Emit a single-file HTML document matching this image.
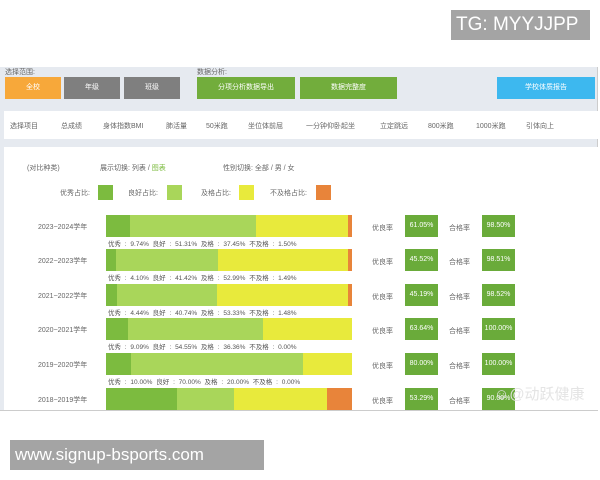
<!DOCTYPE html>
<html><head><meta charset="utf-8"><style>
*{margin:0;padding:0;box-sizing:border-box}
body{width:600px;height:480px;background:#fff;position:relative;overflow:hidden;font-family:"Liberation Sans","Noto Sans CJK SC",sans-serif;}
.a{position:absolute}
.t{font-size:7px;color:#666;white-space:nowrap}
.btn{position:absolute;height:22px;color:#fff;font-size:7px;text-align:center;line-height:22px}
.bar{position:absolute;left:106px;width:246px;height:22px;display:flex}
.cap{position:absolute;left:108px;font-size:6.5px;color:#555;white-space:nowrap;word-spacing:2px}
.g{position:absolute;width:33px;height:22px;background:#6aab3a;color:#fff;font-size:7px;text-align:center;line-height:22px}
</style></head><body>
<div class="a" style="left:451px;top:10px;width:139px;height:30px;background:#a4a4a4;color:#fff;font-size:19px;line-height:30px;padding-left:5px">TG: MYYJJPP</div>
<div class="a" style="left:0;top:67px;width:598px;height:344px;background:#e6eaf0;border-right:1px solid #ccc"></div>
<div class="a t" style="left:5px;top:67px">选择范围:</div>
<div class="a t" style="left:197px;top:67px">数据分析:</div>
<div class="btn" style="left:5px;top:77px;width:56px;background:#f7a83a">全校</div>
<div class="btn" style="left:64px;top:77px;width:56px;background:#7f7f7f">年级</div>
<div class="btn" style="left:124px;top:77px;width:56px;background:#7f7f7f">班级</div>
<div class="btn" style="left:197px;top:77px;width:98px;background:#72ad3c">分项分析数据导出</div>
<div class="btn" style="left:300px;top:77px;width:97px;background:#72ad3c">数据完整度</div>
<div class="btn" style="left:497px;top:77px;width:98px;background:#3db8ef">学校体质报告</div>
<div class="a" style="left:4px;top:111px;width:594px;height:28px;background:#fff"></div>
<div class="a t" style="top:121px;left:10px">选择项目</div>
<div class="a t" style="top:121px;left:61px">总成绩</div>
<div class="a t" style="top:121px;left:103px">身体指数BMI</div>
<div class="a t" style="top:121px;left:166px">肺活量</div>
<div class="a t" style="top:121px;left:206px">50米跑</div>
<div class="a t" style="top:121px;left:248px">坐位体前屈</div>
<div class="a t" style="top:121px;left:306px">一分钟仰卧起坐</div>
<div class="a t" style="top:121px;left:380px">立定跳远</div>
<div class="a t" style="top:121px;left:428px">800米跑</div>
<div class="a t" style="top:121px;left:476px">1000米跑</div>
<div class="a t" style="top:121px;left:526px">引体向上</div>
<div class="a" style="left:4px;top:147px;width:594px;height:264px;background:#fff"></div>
<div class="a t" style="left:27px;top:163px">(对比种类)</div>
<div class="a t" style="left:100px;top:163px">展示切换: 列表 / <span style="color:#7cbb3f">图表</span></div>
<div class="a t" style="left:223px;top:163px">性别切换: 全部 / 男 / 女</div>
<div class="a t" style="left:60px;top:188px">优秀占比:</div><div class="a" style="left:98px;top:185px;width:15px;height:15px;background:#7cbb3f"></div>
<div class="a t" style="left:128px;top:188px">良好占比:</div><div class="a" style="left:167px;top:185px;width:15px;height:15px;background:#a9d65a"></div>
<div class="a t" style="left:201px;top:188px">及格占比:</div><div class="a" style="left:239px;top:185px;width:15px;height:15px;background:#e8ea3c"></div>
<div class="a t" style="left:270px;top:188px">不及格占比:</div><div class="a" style="left:316px;top:185px;width:15px;height:15px;background:#e8843a"></div>

<div class="a t" style="left:38px;top:222px">2023~2024学年</div>
<div class="bar" style="top:215px"><i style="width:9.74%;background:#7cbb3f"></i><i style="width:51.31%;background:#a9d65a"></i><i style="width:37.45%;background:#e8ea3c"></i><i style="width:1.5%;background:#e8843a"></i></div>
<div class="cap" style="top:238px">优秀 : 9.74%  良好 : 51.31%  及格 : 37.45%  不及格 : 1.50%</div>
<div class="a t" style="left:372px;top:223px">优良率</div><div class="g" style="left:405px;top:215px">61.05%</div>
<div class="a t" style="left:449px;top:223px">合格率</div><div class="g" style="left:482px;top:215px">98.50%</div>

<div class="a t" style="left:38px;top:256px">2022~2023学年</div>
<div class="bar" style="top:249px"><i style="width:4.1%;background:#7cbb3f"></i><i style="width:41.42%;background:#a9d65a"></i><i style="width:52.99%;background:#e8ea3c"></i><i style="width:1.49%;background:#e8843a"></i></div>
<div class="cap" style="top:272px">优秀 : 4.10%  良好 : 41.42%  及格 : 52.99%  不及格 : 1.49%</div>
<div class="a t" style="left:372px;top:257px">优良率</div><div class="g" style="left:405px;top:249px">45.52%</div>
<div class="a t" style="left:449px;top:257px">合格率</div><div class="g" style="left:482px;top:249px">98.51%</div>

<div class="a t" style="left:38px;top:291px">2021~2022学年</div>
<div class="bar" style="top:284px"><i style="width:4.44%;background:#7cbb3f"></i><i style="width:40.74%;background:#a9d65a"></i><i style="width:53.33%;background:#e8ea3c"></i><i style="width:1.48%;background:#e8843a"></i></div>
<div class="cap" style="top:307px">优秀 : 4.44%  良好 : 40.74%  及格 : 53.33%  不及格 : 1.48%</div>
<div class="a t" style="left:372px;top:292px">优良率</div><div class="g" style="left:405px;top:284px">45.19%</div>
<div class="a t" style="left:449px;top:292px">合格率</div><div class="g" style="left:482px;top:284px">98.52%</div>

<div class="a t" style="left:38px;top:325px">2020~2021学年</div>
<div class="bar" style="top:318px"><i style="width:9.09%;background:#7cbb3f"></i><i style="width:54.55%;background:#a9d65a"></i><i style="width:36.36%;background:#e8ea3c"></i></div>
<div class="cap" style="top:341px">优秀 : 9.09%  良好 : 54.55%  及格 : 36.36%  不及格 : 0.00%</div>
<div class="a t" style="left:372px;top:326px">优良率</div><div class="g" style="left:405px;top:318px">63.64%</div>
<div class="a t" style="left:449px;top:326px">合格率</div><div class="g" style="left:482px;top:318px">100.00%</div>

<div class="a t" style="left:38px;top:360px">2019~2020学年</div>
<div class="bar" style="top:353px"><i style="width:10%;background:#7cbb3f"></i><i style="width:70%;background:#a9d65a"></i><i style="width:20%;background:#e8ea3c"></i></div>
<div class="cap" style="top:376px">优秀 : 10.00%  良好 : 70.00%  及格 : 20.00%  不及格 : 0.00%</div>
<div class="a t" style="left:372px;top:361px">优良率</div><div class="g" style="left:405px;top:353px">80.00%</div>
<div class="a t" style="left:449px;top:361px">合格率</div><div class="g" style="left:482px;top:353px">100.00%</div>

<div class="a t" style="left:38px;top:395px">2018~2019学年</div>
<div class="bar" style="top:388px"><i style="width:29%;background:#7cbb3f"></i><i style="width:23%;background:#a9d65a"></i><i style="width:38%;background:#e8ea3c"></i><i style="width:10%;background:#e8843a"></i></div>
<div class="a t" style="left:372px;top:396px">优良率</div><div class="g" style="left:405px;top:388px">53.29%</div>
<div class="a t" style="left:449px;top:396px">合格率</div><div class="g" style="left:482px;top:388px">90.00%</div>

<div class="a" style="left:0;top:411px;width:600px;height:69px;background:#fff"></div>
<div class="a" style="left:0;top:410px;width:598px;height:1px;background:#ccc"></div>
<div class="a" style="left:494px;top:383px;font-size:15px;color:#e4e4e4;white-space:nowrap">☺@动跃健康</div>
<div class="a" style="left:10px;top:440px;width:254px;height:30px;background:#a4a4a4;color:#fff;font-size:17px;line-height:30px;padding-left:5px">www.signup-bsports.com</div>
</body></html>
